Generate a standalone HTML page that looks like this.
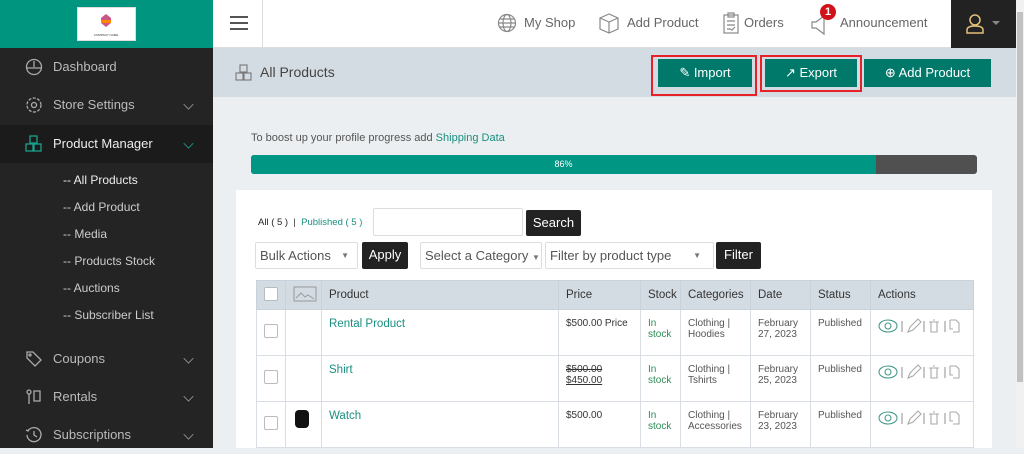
<!DOCTYPE html>
<html><head><meta charset="utf-8"><style>
*{box-sizing:border-box;margin:0;padding:0}
body{width:1024px;height:448px;overflow:hidden;font-family:"Liberation Sans",sans-serif;background:#eceff1;position:relative;font-size:12px;color:#333}
.abs{position:absolute}
#side{left:0;top:0;width:213px;height:448px;background:#242424}
#logo{left:0;top:0;width:213px;height:48px;background:#00957f}
#logo div{position:absolute;left:77px;top:7px;width:59px;height:34px;background:#fff;border:1px solid #ddd}
.nav{position:absolute;left:0;width:213px;height:38px;color:#bbb;font-size:13px;line-height:38px;padding-left:53px}
.nav .ic{position:absolute;left:25px;top:10px;width:18px;height:18px}
.nav .chev{position:absolute;left:184px;top:14px;width:9px;height:9px;border-right:1.5px solid #999;border-bottom:1.5px solid #999;transform:rotate(45deg) scale(.8)}
.sub{position:absolute;left:63px;color:#ccc;font-size:12px}
#top{left:213px;top:0;width:803px;height:48px;background:#fff;border-bottom:1px solid #ddd}
.tl{position:absolute;top:15px;color:#666;font-size:13px}
#hdr{left:213px;top:48px;width:803px;height:49px;background:#d4dce3}
.btn{position:absolute;top:59px;height:28px;background:#00796b;color:#fff;font-size:13px;line-height:28px;text-align:center}
.red{position:absolute;border:2px solid #e8202a}
#card{left:236px;top:190px;width:756px;height:258px;background:#fff}
.inp{position:absolute;background:#fff;border:1px solid #ddd;border-radius:2px;font-size:13px;color:#555;line-height:26px;padding-left:4px}
.dk{position:absolute;background:#222;color:#fff;font-size:13px;line-height:26px;text-align:center;border-radius:2px}
table{position:absolute;left:256px;top:280px;width:718px;border-collapse:collapse;font-size:11px}
th{background:#d4dce3;height:29px;font-weight:normal;text-align:left;padding-left:7px;font-size:11.5px;color:#333;border:1px solid #c9d2da}
td{height:46px;vertical-align:top;padding:8px 0 0 7px;border:1px solid #d8dee4;color:#555}
.cb{display:inline-block;width:14px;height:14px;border:1px solid #bbb;border-radius:2px;background:#fff}
.g{color:#2e8b57}.t{color:#198f7f}
#sb{left:1016px;top:0;width:8px;height:448px;background:#f1f1f1}
</style></head><body>
<div id="side" class="abs"></div>
<div id="logo" class="abs"><div><svg width="57" height="32"><path d="M28 6l5 4v5l-5 4-5-4v-5z" fill="#c58"/><rect x="23" y="12" width="10" height="3" fill="#f80"/><text x="28" y="28" font-size="3" text-anchor="middle" fill="#333">COMPANY NAME</text></svg></div></div>
<div class="nav" style="top:48px"><svg class="ic" viewBox="0 0 18 18" fill="none" stroke="#aaa" stroke-width="1.3"><circle cx="9" cy="9" r="7.5"/><path d="M9 3v6M2 10h14"/></svg>Dashboard</div>
<div class="nav" style="top:86px"><svg class="ic" viewBox="0 0 18 18" fill="none" stroke="#aaa" stroke-width="1.3"><circle cx="9" cy="9" r="2.5"/><circle cx="9" cy="9" r="7" stroke-dasharray="3 1.5"/></svg>Store Settings<span class="chev"></span></div>
<div class="nav" style="top:125px;background:#1b1b1b;color:#eee"><svg class="ic" viewBox="0 0 18 18" fill="none" stroke="#1aa08b" stroke-width="1.3"><rect x="5" y="1" width="7" height="7"/><rect x="1" y="9" width="7" height="7"/><rect x="9" y="9" width="7" height="7"/></svg>Product Manager<span class="chev" style="border-color:#1aa08b"></span></div>
<div class="sub" style="top:173px;color:#eee">-- All Products</div>
<div class="sub" style="top:200px">-- Add Product</div>
<div class="sub" style="top:227px">-- Media</div>
<div class="sub" style="top:254px">-- Products Stock</div>
<div class="sub" style="top:281px">-- Auctions</div>
<div class="sub" style="top:308px">-- Subscriber List</div>
<div class="nav" style="top:340px"><svg class="ic" viewBox="0 0 18 18" fill="none" stroke="#aaa" stroke-width="1.3"><path d="M2 2h6l8 8-6 6-8-8z"/><circle cx="5" cy="5" r="1"/></svg>Coupons<span class="chev"></span></div>
<div class="nav" style="top:378px"><svg class="ic" viewBox="0 0 18 18" fill="none" stroke="#aaa" stroke-width="1.3"><circle cx="4" cy="4" r="2"/><path d="M4 6v10M9 3h6v10H9z"/></svg>Rentals<span class="chev"></span></div>
<div class="nav" style="top:416px"><svg class="ic" viewBox="0 0 18 18" fill="none" stroke="#aaa" stroke-width="1.3"><path d="M3 5A7 7 0 1 1 2 9"/><path d="M9 5v4l3 2M1 4l2 1 1-2"/></svg>Subscriptions<span class="chev"></span></div>

<div id="top" class="abs">
<div class="abs" style="left:0;top:0;width:50px;height:48px;border-right:1px solid #ddd"><div style="position:absolute;left:17px;top:16px;width:18px;height:2px;background:#555;box-shadow:0 6px 0 #555,0 12px 0 #555"></div></div>
<svg class="abs" style="left:284px;top:13px" width="20" height="20" fill="none" stroke="#888" stroke-width="1.2"><circle cx="10" cy="10" r="8.5"/><ellipse cx="10" cy="10" rx="4" ry="8.5"/><path d="M1.5 10h17M3 6h14M3 14h14"/></svg>
<div class="tl" style="left:311px">My Shop</div>
<svg class="abs" style="left:385px;top:12px" width="22" height="22" fill="none" stroke="#888" stroke-width="1.2"><path d="M2 6l9-4 9 4v11l-9 4-9-4z M2 6l9 4 9-4 M11 10v11"/></svg>
<div class="tl" style="left:414px">Add Product</div>
<svg class="abs" style="left:510px;top:12px" width="16" height="22" fill="none" stroke="#888" stroke-width="1.2"><rect x="1" y="3" width="14" height="18"/><rect x="5" y="1" width="6" height="4"/><path d="M4 9h8M4 13h8M4 17h3l2 1 3-3"/></svg>
<div class="tl" style="left:531px">Orders</div>
<svg class="abs" style="left:597px;top:14px" width="22" height="22" fill="none" stroke="#888" stroke-width="1.2"><path d="M2 8h4l8-6v18l-8-6H2z"/></svg>
<div class="abs" style="left:607px;top:4px;width:16px;height:16px;border-radius:8px;background:#d0121b;color:#fff;font-size:11px;font-weight:bold;text-align:center;line-height:16px">1</div>
<div class="tl" style="left:627px">Announcement</div>
<div class="abs" style="left:738px;top:0;width:65px;height:48px;background:#222"><svg class="abs" style="left:14px;top:13px" width="20" height="22" fill="none" stroke="#e5c07b" stroke-width="1.5"><circle cx="10" cy="7" r="5"/><path d="M2 20v-3c0-3 3-4 8-4s8 1 8 4v3z"/></svg><div class="abs" style="left:41px;top:21px;border:4px solid transparent;border-top:4px solid #888"></div></div>
</div>

<div id="hdr" class="abs"><svg class="abs" style="left:22px;top:16px" width="18" height="18" fill="none" stroke="#777" stroke-width="1.1"><rect x="5" y="1" width="7" height="7"/><rect x="1" y="9" width="7" height="7"/><rect x="9" y="9" width="7" height="7"/></svg><div class="abs" style="left:47px;top:16px;font-size:14px;color:#444">All Products</div></div>
<div class="btn" style="left:658px;width:94px">&#9998; Import</div>
<div class="btn" style="left:765px;width:92px">&#8599; Export</div>
<div class="btn" style="left:864px;width:127px">&#8853; Add Product</div>
<div class="red" style="left:651px;top:55px;width:106px;height:41px"></div>
<div class="red" style="left:760px;top:55px;width:102px;height:37px"></div>

<div class="abs" style="left:251px;top:132px;font-size:11px;color:#555">To boost up your profile progress add <span class="t">Shipping Data</span></div>
<div class="abs" style="left:251px;top:155px;width:726px;height:19px;background:#505050;border-radius:3px;overflow:hidden"><div style="width:625px;height:19px;background:#009684;color:#fff;font-size:9px;text-align:center;line-height:19px">86%</div></div>

<div id="card" class="abs"></div>
<div class="abs" style="left:258px;top:217px;font-size:9.5px"><b style="font-weight:normal;color:#222">All ( 5 )</b> &nbsp;| &nbsp;<span class="t">Published ( 5 )</span></div>
<div class="inp" style="left:373px;top:208px;width:150px;height:28px"></div>
<div class="dk" style="left:526px;top:210px;width:55px;height:26px">Search</div>
<div class="inp" style="left:255px;top:242px;width:103px;height:27px">Bulk Actions <span style="position:absolute;right:8px;font-size:8px;color:#777">&#9660;</span></div>
<div class="dk" style="left:362px;top:242px;width:46px;height:27px">Apply</div>
<div class="inp" style="left:420px;top:242px;width:122px;height:27px">Select a Category <span style="font-size:8px;color:#777">&#9660;</span></div>
<div class="inp" style="left:545px;top:242px;width:169px;height:27px">Filter by product type<span style="position:absolute;right:12px;font-size:8px;color:#777">&#9660;</span></div>
<div class="dk" style="left:716px;top:242px;width:45px;height:27px">Filter</div>

<table>
<tr><th style="width:29px"><span class="cb"></span></th><th style="width:36px"><svg width="24" height="16" fill="none" stroke="#999"><rect x="1" y="1" width="22" height="14"/><path d="M3 12l5-5 4 4 3-2 6 4"/></svg></th><th style="width:237px">Product</th><th style="width:82px">Price</th><th style="width:40px">Stock</th><th style="width:70px">Categories</th><th style="width:60px">Date</th><th style="width:60px">Status</th><th>Actions</th></tr>
<tr><td style="padding-top:14px"><span class="cb"></span></td><td></td><td class="t" style="font-size:11.5px">Rental Product</td><td style="color:#333;font-size:10px">$500.00 Price</td><td class="g" style="font-size:10px">In<br>stock</td><td style="font-size:10px">Clothing |<br>Hoodies</td><td style="font-size:10px">February<br>27, 2023</td><td style="font-size:10px">Published</td><td><svg width="90" height="16" fill="none" stroke="#4a9a8c" stroke-width="1.1"><ellipse cx="10" cy="8" rx="9" ry="6"/><circle cx="10" cy="8" r="3"/><path d="M24 3v11M46 3v11M67 3v11" stroke="#999"/><path d="M30 14l2-5 8-8 3 3-8 8z" stroke="#aaa"/><path d="M51 4h10M53 4v10h6V4M55 2h2" stroke="#aaa"/><path d="M72 2h6l3 3v9h-6M72 2v9h3" stroke="#aaa"/></svg></td></tr>
<tr><td style="padding-top:14px"><span class="cb"></span></td><td></td><td class="t" style="font-size:11.5px">Shirt</td><td style="color:#333;font-size:10px"><s>$500.00</s><br><u>$450.00</u></td><td class="g" style="font-size:10px">In<br>stock</td><td style="font-size:10px">Clothing |<br>Tshirts</td><td style="font-size:10px">February<br>25, 2023</td><td style="font-size:10px">Published</td><td><svg width="90" height="16" fill="none" stroke="#4a9a8c" stroke-width="1.1"><ellipse cx="10" cy="8" rx="9" ry="6"/><circle cx="10" cy="8" r="3"/><path d="M24 3v11M46 3v11M67 3v11" stroke="#999"/><path d="M30 14l2-5 8-8 3 3-8 8z" stroke="#aaa"/><path d="M51 4h10M53 4v10h6V4M55 2h2" stroke="#aaa"/><path d="M72 2h6l3 3v9h-6M72 2v9h3" stroke="#aaa"/></svg></td></tr>
<tr><td style="padding-top:14px"><span class="cb"></span></td><td><div style="width:14px;height:18px;background:#111;border-radius:4px;margin-left:2px"></div></td><td class="t" style="font-size:11.5px">Watch</td><td style="color:#333;font-size:10px">$500.00</td><td class="g" style="font-size:10px">In<br>stock</td><td style="font-size:10px">Clothing |<br>Accessories</td><td style="font-size:10px">February<br>23, 2023</td><td style="font-size:10px">Published</td><td><svg width="90" height="16" fill="none" stroke="#4a9a8c" stroke-width="1.1"><ellipse cx="10" cy="8" rx="9" ry="6"/><circle cx="10" cy="8" r="3"/><path d="M24 3v11M46 3v11M67 3v11" stroke="#999"/><path d="M30 14l2-5 8-8 3 3-8 8z" stroke="#aaa"/><path d="M51 4h10M53 4v10h6V4M55 2h2" stroke="#aaa"/><path d="M72 2h6l3 3v9h-6M72 2v9h3" stroke="#aaa"/></svg></td></tr>
</table>
<div id="sb" class="abs"><div style="position:absolute;left:1px;top:12px;width:6px;height:370px;background:#c1c1c1"></div></div>
</body></html>
